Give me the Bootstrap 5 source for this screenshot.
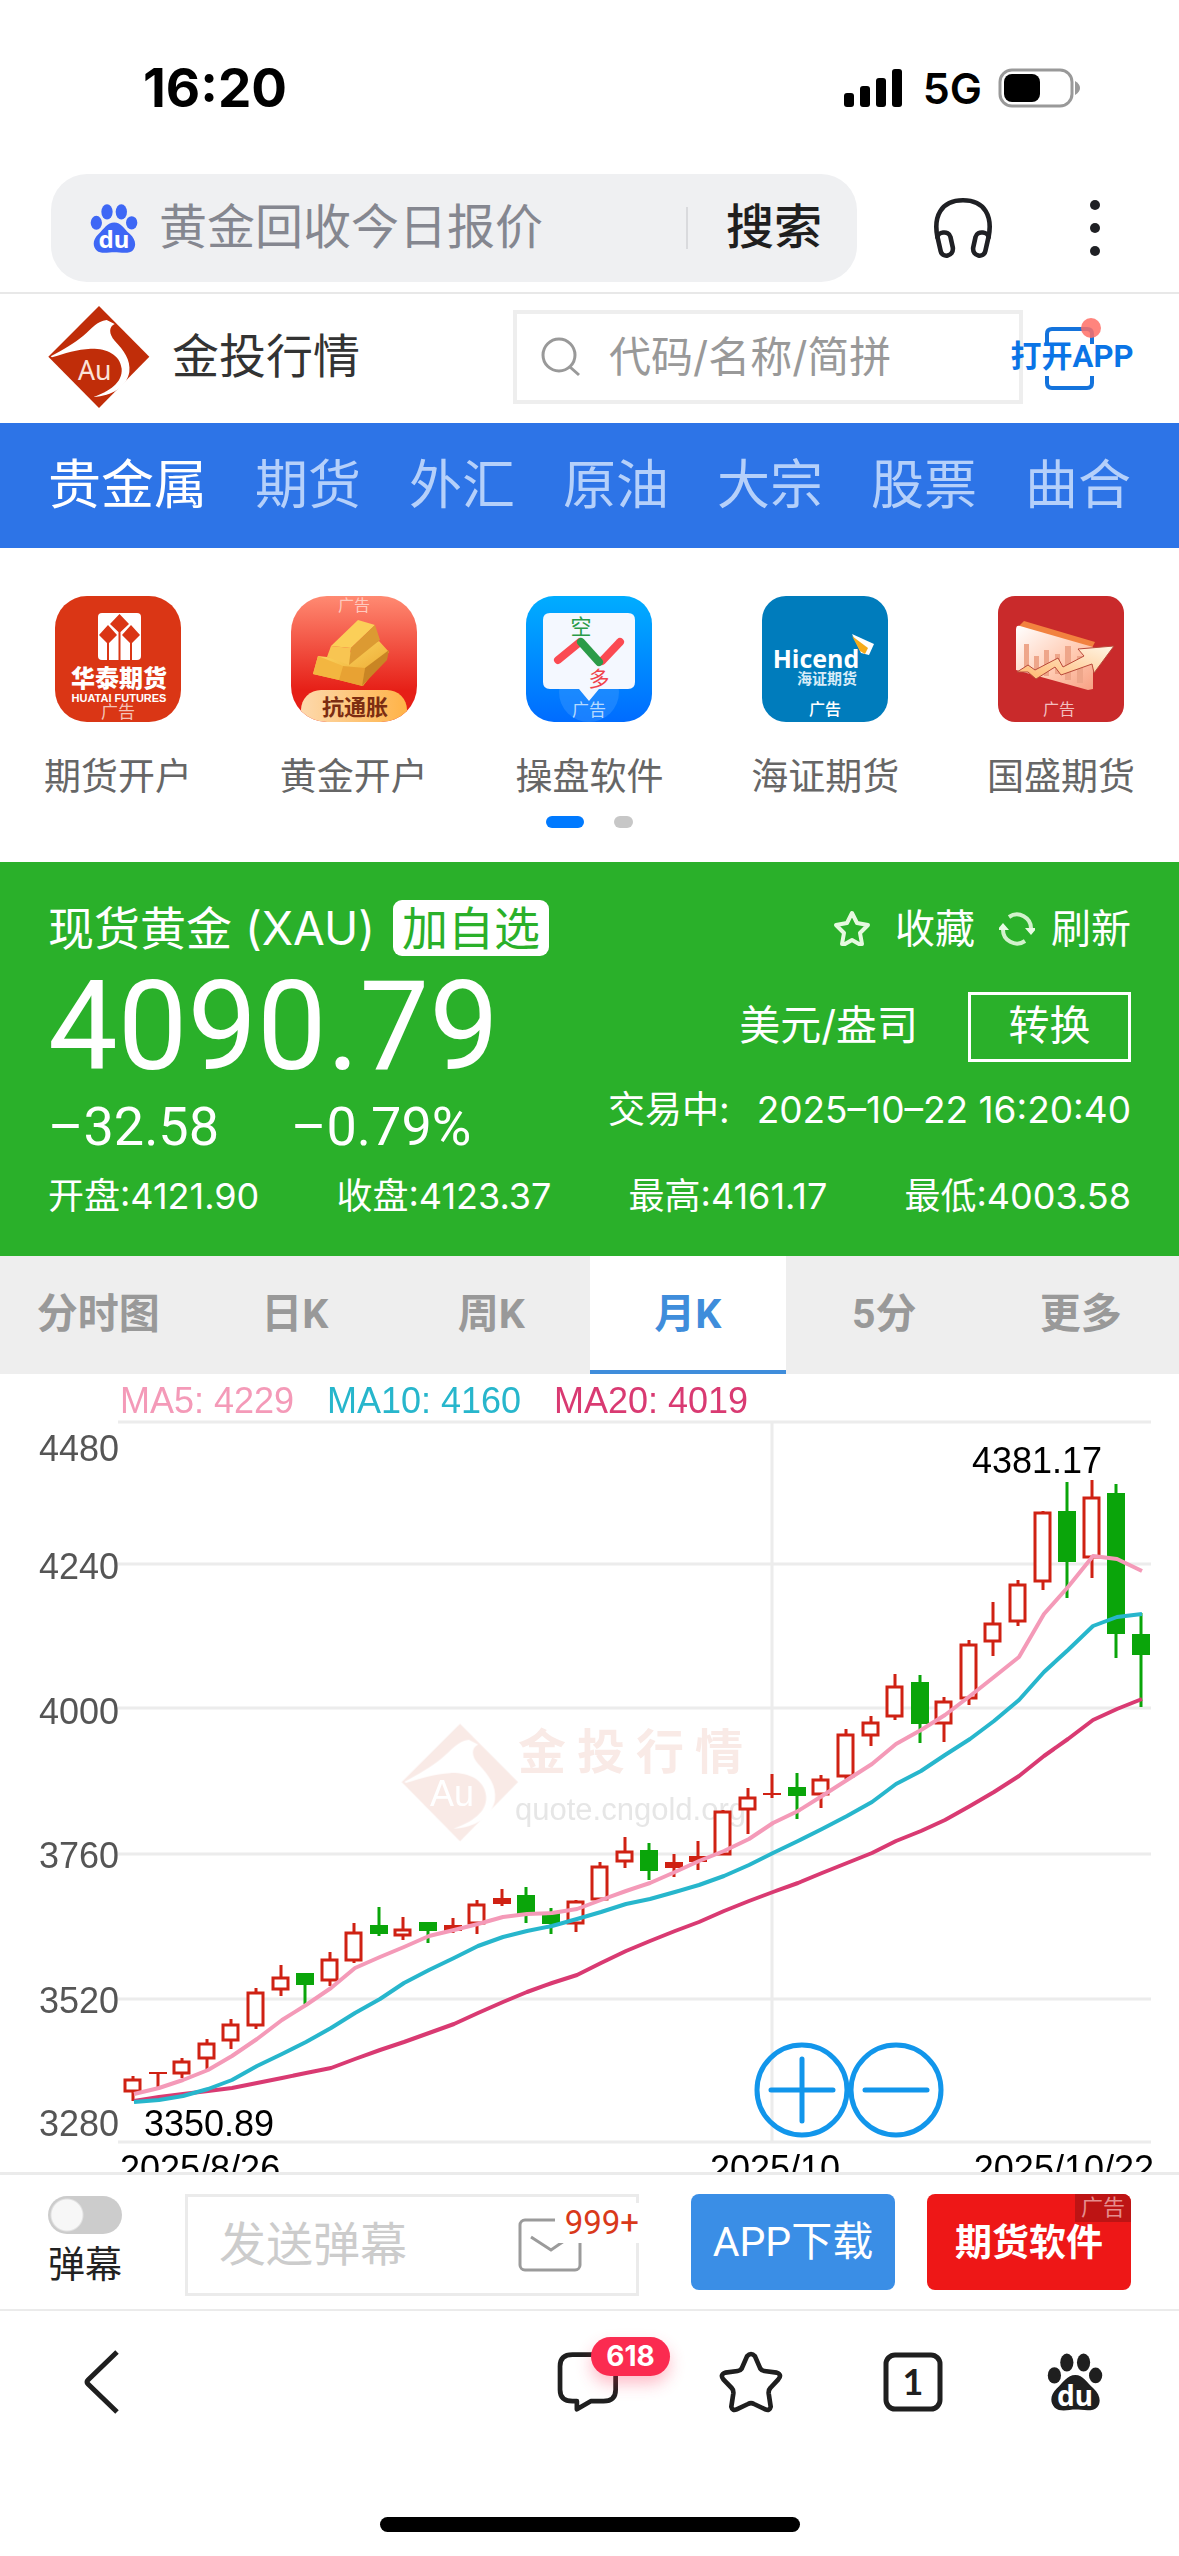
<!DOCTYPE html>
<html lang="zh-CN">
<head>
<meta charset="utf-8">
<meta name="viewport" content="width=device-width, initial-scale=1">
<title>现货黄金 - 金投行情</title>
<link href="https://cdn.jsdelivr.net/npm/bootstrap@5.3.0/dist/css/bootstrap.min.css" rel="stylesheet">
<style>
  body { font-family: Roboto, "Noto Sans CJK SC", sans-serif; color: #333; background: #fff; }
  svg { display: block; flex: none; }
  button { font-family: inherit; }
  a { text-decoration: none; }
  .gutter { padding-left: 48px; padding-right: 48px; }

  .sys-bar { height: 174px; padding: 2px 97px 0 143px; font-family: Inter, sans-serif; color: #000; }
  .sys-time { font-size: 53px; font-weight: 700; line-height: 60px; }
  .sys-net { font-size: 43px; font-weight: 600; line-height: 60px; }

  .url-bar { padding: 0 79px 10px 51px; border-bottom: 2px solid #e8e8e8; }
  .url-pill { height: 108px; width: 806px; background: #eff0f2; border-radius: 36px; padding: 0 35px 0 39px; }
  .url-pill input { flex: 1 1 0; font-size: 48px; line-height: 60px; color: #858790; border: 0; background: none; outline: 0; min-width: 0; padding: 0; margin-left: 21px; }
  .url-pill input::placeholder { color: #858790; opacity: 1; }
  .url-split { width: 2px; height: 42px; background: #d9dadd; }
  .url-pill button { flex: none; white-space: nowrap; font-size: 48px; line-height: 60px; font-weight: 500; color: #1f1f1f; border: 0; background: none; padding: 0; margin-left: 38px; }
  .bare { border: 0; background: none; padding: 0; }
  .more-btn { margin-left: 97px; }

  .site-head { height: 129px; padding-bottom: 4px; }
  .site-name { font-size: 47px; line-height: 60px; color: #333; margin-left: 22px; }
  .code-box { width: 510px; height: 94px; border: 4px solid #eee; margin-left: auto; padding-left: 24px; }
  .code-box input { border: 0; outline: 0; background: none; min-width: 0; font-family: Inter, "Noto Sans CJK SC", sans-serif; font-size: 42px; line-height: 56px; padding: 0; margin-left: 28px; }
  .code-box input::placeholder { color: #999; opacity: 1; }
  .open-app { width: 120px; height: 96px; margin-left: -11px; margin-right: -1px; }
  .open-app span { font-size: 31px; line-height: 40px; font-weight: 700; color: #0a74e6; white-space: nowrap; }

  .cat-nav { background: #2d74e7; height: 125px; }
  .cat-nav a { font-size: 53px; line-height: 72px; color: #b5d0fa; }
  .cat-nav a.active { color: #fff; }

  .apps { padding: 48px 0 34px; }
  .apps a { color: #666; font-size: 37px; line-height: 48px; gap: 32px; }
  .apps svg { width: 126px; height: 126px; }
  .dots { gap: 30px; margin-top: 14px; }
  .dots span { width: 19px; height: 12px; border-radius: 6px; background: #c7c7c7; }
  .dots span.on { width: 38px; background: #007aff; }

  .quote { background: #2ab02a; color: #fff; height: 394px; padding-top: 34px; font-family: Inter, "Noto Sans CJK SC", sans-serif; }
  .q-name { font-size: 46px; line-height: 60px; }
  .q-add { font-size: 46px; line-height: 56px; color: #2ab02a; background: #fff; border: 0; border-radius: 9px; padding: 0 9px; margin-left: 18px; }
  .q-tool { font-size: 40px; line-height: 60px; padding-top: 3px; color: #fff; }
  .q-price { font-family: Roboto, sans-serif; font-size: 124px; line-height: 112px; }
  .q-mid { height: 136px; }
  .q-unit { font-size: 41px; line-height: 60px; padding-bottom: 4px; }
  .q-swap { width: 163px; height: 70px; border: 3px solid #fff; background: none; color: #fff; font-size: 41px; line-height: 56px; padding: 0 0 4px; margin-left: 50px; }
  .q-chg { font-family: Roboto, sans-serif; font-size: 54px; line-height: 64px; gap: 72px; }
  .q-time { font-size: 37px; line-height: 48px; gap: 27px; margin-top: -9px; }
  .q-row { font-size: 36px; line-height: 48px; margin-top: 13px; }

  .k-tabs { background: #eee; height: 118px; }
  .k-tabs a { flex: 1; font-size: 41px; line-height: 56px; font-weight: 700; color: #999; border-bottom: 4px solid transparent; padding-top: 2px; }
  .k-tabs a.active { color: #3f8ddb; background: #fff; border-color: #3f8ddb; }

  .k-chart text { font-family: "Liberation Sans", Arial, sans-serif; font-size: 36px; }
  .k-chart .cjk { font-family: "Noto Sans CJK SC", sans-serif; font-size: 48px; font-weight: 700; }
  .k-chart .soft { font-size: 31px; }

  .say-bar { height: 139px; border-top: 3px solid #ebebeb; border-bottom: 2px solid #ebebeb; padding-top: 19px; }
  .say-toggle { appearance: none; display: block; width: 74px; height: 38px; border-radius: 19px; background: radial-gradient(circle at 19px 19px, #f7f7f7 15px, #ccc 17px); margin: 2px 0 8px; }
  .say-sw { font-size: 37px; line-height: 48px; color: #222; }
  .say-box { width: 454px; height: 102px; border: 3px solid #ebebeb; margin-left: 63px; padding-left: 31px; }
  .say-box input { border: 0; outline: 0; background: none; min-width: 0; width: 290px; font-size: 47px; line-height: 60px; padding: 0; }
  .say-box input::placeholder { color: #ccc; opacity: 1; }
  .say-num { font-size: 33px; line-height: 40px; color: #d9391a; background: #fff; padding: 0 0 0 10px; right: -3px; top: 6px; }
  .say-btn { width: 204px; height: 96px; border: 0; border-radius: 8px; background: #3a8ee6; color: #fff; font-size: 41px; line-height: 56px; padding: 0; }
  .say-btn.hot { background: #ee1717; font-size: 37px; font-weight: 700; margin-left: 32px; padding-top: 4px; }
  .say-ad { font-size: 22px; line-height: 28px; font-weight: 400; background: #bd1414; color: #e58d8d; padding: 0 6px; top: 0; right: 0; border-top-right-radius: 8px; }

  .tool-bar { padding: 39px 76px 0 82px; }
  .tool-bar a + a + a { margin-left: 100px; }
  .msg-num { font-family: Inter, sans-serif; font-size: 28px; line-height: 39px; font-weight: 700; color: #fff; background: #fb2b50; border-radius: 20px; width: 79px; left: 34px; top: -14px; text-align: center; box-shadow: 0 8px 16px rgba(251,43,80,.3); }
  .home-pill { width: 420px; height: 15px; border-radius: 8px; background: #000; margin: 103px auto 24px; }
</style>
<script src="https://cdn.jsdelivr.net/npm/bootstrap@5.3.0/dist/js/bootstrap.bundle.min.js"></script>
</head>
<body>
<svg width="0" height="0" class="position-absolute" aria-hidden="true">
  <symbol id="paw" viewBox="150 36 144 152">
    <g fill="currentColor"><ellipse cx="169" cy="95" rx="17" ry="21"/><ellipse cx="201" cy="62" rx="17" ry="23"/><ellipse cx="244" cy="62" rx="17" ry="23"/><ellipse cx="275" cy="95" rx="17" ry="20"/>
    <path d="M223 94C243 94 252 113 269 128C287 144 290 164 279 177C268 190 240 183 223 183C206 183 183 190 170 178C157 165 158 145 175 129C192 113 202 94 223 94Z"/></g>
  </symbol>
  <symbol id="aulogo" viewBox="22 346 306 310">
    <path fill="currentColor" d="M175 348L326 500L175 654L23 500Z"/>
    <path fill="#fff" d="M30 499C70 477 100 460 128 437C155 415 168 394 198 390L222 402C204 410 204 432 222 452C250 482 270 508 266 546C258 590 215 618 158 621C206 604 246 578 243 536C238 492 196 475 150 476C110 478 72 490 34 502Z"/>
  </symbol>
</svg>

<header class="sys-bar d-flex align-items-center justify-content-between">
  <div class="sys-time">16:20</div>
  <div class="d-flex align-items-center">
    <svg width="60" height="38" viewBox="0 0 60 38" aria-hidden="true"><rect x="1" y="24" width="10" height="14" rx="3"/><rect x="17" y="17" width="10" height="21" rx="3"/><rect x="33" y="9" width="10" height="29" rx="3"/><rect x="49" y="0" width="10" height="38" rx="3"/></svg>
    <div class="sys-net mx-3 ps-1">5G</div>
    <svg width="84" height="40" viewBox="0 0 84 40" aria-hidden="true"><rect x="2" y="2" width="72" height="36" rx="12" fill="none" stroke="#999" stroke-width="3"/><rect x="6" y="6" width="36" height="28" rx="8"/><path d="M77 13Q82 16 82 20Q82 24 77 27Z" fill="#999"/></svg>
  </div>
</header>

<form class="url-bar d-flex align-items-center justify-content-between" onsubmit="return false">
  <div class="url-pill d-flex align-items-center">
    <svg width="48" height="51" viewBox="150 36 144 152" color="#3e67f5" role="img" aria-label="百度"><use href="#paw" x="150" y="36" width="144" height="152"/><text x="222" y="171" text-anchor="middle" font-family="Noto Sans" font-size="72" font-weight="700" fill="#fff">du</text></svg>
    <input type="text" placeholder="黄金回收今日报价" aria-label="搜索内容">
    <span class="url-split"></span>
    <button type="submit">搜索</button>
  </div>
  <button class="bare ms-auto" type="button" aria-label="听">
    <svg width="60" height="62" viewBox="38 34 182 186" fill="none" stroke="#1f2024" stroke-width="14"><path d="M52 158C38 92 62 43 129 43C196 43 220 92 206 158"/><path d="M52 156C50 140 86 132 91 154L98 186C102 214 65 220 61 196ZM206 156C208 140 172 132 167 154L160 186C156 214 193 220 197 196Z"/></svg>
  </button>
  <button class="bare more-btn" type="button" aria-label="更多">
    <svg width="10" height="58" viewBox="0 0 10 58" fill="#1f2024"><circle cx="5" cy="6" r="5"/><circle cx="5" cy="29" r="5"/><circle cx="5" cy="52" r="5"/></svg>
  </button>
</form>

<div class="site-head gutter d-flex align-items-center">
  <svg width="102" height="104" viewBox="22 346 306 310" color="#c02d09" role="img" aria-label="金投网"><use href="#aulogo" x="22" y="346" width="306" height="310"/><text x="162" y="570" text-anchor="middle" font-family="Noto Sans" font-size="80" fill="#fbe3d9">Au</text></svg>
  <div class="site-name">金投行情</div>
  <label class="code-box d-flex align-items-center">
    <svg width="40" height="40" viewBox="0 0 40 40" fill="none" stroke="#999" stroke-width="3"><circle cx="18" cy="18" r="16"/><path d="M29 30L38 38"/></svg>
    <input class="flex-grow-1" type="text" placeholder="代码/名称/简拼" aria-label="代码名称简拼">
  </label>
  <a class="open-app position-relative d-flex align-items-center justify-content-center" href="#">
    <svg class="position-absolute top-0 start-0" width="120" height="96" viewBox="0 0 120 96" fill="none" stroke="#1473dc" stroke-width="4"><path d="M35 35V25Q35 20 40 20H75Q80 20 80 25V35M35 67V74Q35 79 40 79H75Q80 79 80 74V67"/><circle cx="79" cy="19" r="10" fill="#ff6f66" opacity=".85" stroke="none"/></svg>
    <span class="position-relative">打开APP</span>
  </a>
</div>

<nav class="cat-nav gutter d-flex align-items-center justify-content-between">
  <a class="active" href="#">贵金属</a><a href="#">期货</a><a href="#">外汇</a><a href="#">原油</a><a href="#">大宗</a><a href="#">股票</a><a href="#">曲合</a>
</nav>

<section class="apps">
  <div class="row row-cols-5 g-0">
    <a class="col d-flex flex-column align-items-center" href="#">
      <svg viewBox="0 0 126 126" font-family="Noto Sans CJK SC" text-anchor="middle"><rect width="126" height="126" rx="32" fill="#da3615"/><rect x="43" y="17" width="43" height="47" rx="4" fill="#fff"/><path fill="#da3615" d="M64.500 18L74 28L64.500 37L55 28ZM53 29L62 39L53 48L44 39ZM76 29L85 39L76 48L67 39ZM52 46h2v18h-2zM63.500 36h2v28h-2zM75 46h2v18h-2z"/><text x="64" y="91" font-size="24" font-weight="900" fill="#fff">华泰期货</text><text x="64" y="106" font-size="11" font-weight="700" font-family="Liberation Sans" fill="#fff">HUATAI FUTURES</text><text x="63" y="122" font-size="17" fill="#f3c3b7">广告</text></svg>
      <span>期货开户</span>
    </a>
    <a class="col d-flex flex-column align-items-center" href="#">
      <svg viewBox="0 0 126 126" font-family="Noto Sans CJK SC" text-anchor="middle">
        <defs><linearGradient id="gr" x2="0" y2="1"><stop stop-color="#ff8a72"/><stop offset=".75" stop-color="#e61f17"/></linearGradient><linearGradient id="gg" x2="1" y2="1"><stop stop-color="#ffdf6a"/><stop offset="1" stop-color="#e9a02a"/></linearGradient><linearGradient id="gp" x2="1"><stop stop-color="#fdd9ad"/><stop offset="1" stop-color="#ffb347"/></linearGradient><clipPath id="gc"><rect width="126" height="126" rx="36"/></clipPath></defs>
        <g clip-path="url(#gc)"><rect width="126" height="126" fill="url(#gr)"/>
        <path d="M88 45L98 56L72 90L48 84L22 78L27 60L45 62Z" fill="url(#gg)"/>
        <path d="M27 60L52 70L48 84L22 78Z" fill="#f3b640"/><path d="M52 70L74 72L71 90L48 84Z" fill="#e8a233"/><path d="M74 72L98 54L96 64L71 90Z" fill="#c98524"/>
        <path d="M67 24L84 29L60 52L40 50Z" fill="#fbcf58"/><path d="M40 50L60 52L58 69L36 61Z" fill="#f8c552"/><path d="M84 29L89 44L58 69L60 52Z" fill="#dc9a32"/>
        <rect x="10" y="94" width="106" height="40" rx="20" fill="url(#gp)"/></g>
        <text x="64" y="119" font-size="22" font-weight="700" fill="#7c2d12">抗通胀</text><text x="63" y="15" font-size="16" fill="#ffc9bd">广告</text></svg>
      <span>黄金开户</span>
    </a>
    <a class="col d-flex flex-column align-items-center" href="#">
      <svg viewBox="0 0 126 126" font-family="Noto Sans CJK SC" text-anchor="middle">
        <defs><linearGradient id="bl" x2="0" y2="1"><stop stop-color="#00adff"/><stop offset="1" stop-color="#006cff"/></linearGradient></defs>
        <rect width="126" height="126" rx="28" fill="url(#bl)"/><circle cx="63" cy="96" r="30" fill="#4ba3ff" opacity=".35"/><path d="M24 17H102Q109 17 109 24V86Q109 93 102 93H73L63 105L53 93H24Q17 93 17 86V24Q17 17 24 17Z" fill="#f4f8ff"/><g fill="none" stroke-width="8" stroke-linecap="round"><path d="M32 64L54 46" stroke="#fb4a52"/><path d="M76 65L94 46" stroke="#fb4a52"/><path d="M55 46L73 66" stroke="#2b9b48"/></g><text x="55" y="38" font-size="21" fill="#2b9b48">空</text><text x="73" y="90" font-size="21" fill="#f0434c">多</text><text x="63" y="120" font-size="17" fill="#b5daff">广告</text></svg>
      <span>操盘软件</span>
    </a>
    <a class="col d-flex flex-column align-items-center" href="#">
      <svg viewBox="0 0 126 126" font-family="Noto Sans CJK SC" text-anchor="middle"><rect width="126" height="126" rx="24" fill="#007cbc"/><text x="54" y="72" font-size="25" font-weight="700" font-family="Open Sans" fill="#fff">Hicend</text><path d="M90 38L112 48L107 59L99 57Z" fill="#fff"/><path d="M90 40L106 52L103 58L98 55Z" fill="#f6ab1b"/><text x="65" y="88" font-size="15" font-weight="700" fill="#d8ecf8">海证期货</text><text x="63" y="119" font-size="16" font-weight="500" fill="#fff">广告</text></svg>
      <span>海证期货</span>
    </a>
    <a class="col d-flex flex-column align-items-center" href="#">
      <svg viewBox="0 0 126 126" font-family="Noto Sans CJK SC" text-anchor="middle">
        <defs><linearGradient id="pl" x2="1" y2="1"><stop stop-color="#fff"/><stop offset=".6" stop-color="#ffc9b0"/><stop offset="1" stop-color="#f7a184"/></linearGradient><linearGradient id="ar" x1="0" y1="1" x2="1" y2="0"><stop stop-color="#ffb56b"/><stop offset="1" stop-color="#fff6e6"/></linearGradient></defs>
        <rect width="126" height="126" rx="17" fill="#c92a2b"/><path d="M20 31L26 25L97 46L94 52Z" fill="#f2823f"/><path d="M18 33Q18 29 22 30L95 51V93L90 94L18 74Z" fill="url(#pl)"/><path d="M26 48h5v24h-5zM36 60h5v14h-5zM46 54h5v26h-5zM57 58h5v20h-5zM67 50h6v34h-6zM79 60h6v27h-6z" fill="#eea68a"/><path d="M19 76L30 69L37 74L60 62L65 71L86 60L80 53L116 50L96 77L94 68L63 79L57 71L38 83L30 76Z" fill="url(#ar)" stroke="#b9493a" stroke-width="1"/><text x="61" y="119" font-size="16" fill="#f2bfc0">广告</text></svg>
      <span>国盛期货</span>
    </a>
  </div>
  <div class="dots d-flex justify-content-center"><span class="on"></span><span></span></div>
</section>

<section class="quote gutter">
  <div class="d-flex align-items-center">
    <span class="q-name">现货黄金 (XAU)</span>
    <button class="q-add" type="button">加自选</button>
    <a class="q-tool d-flex align-items-center ms-auto" href="#"><svg class="me-4" width="38" height="38" viewBox="0 0 38 38" fill="none" stroke="#e6f9e0" stroke-width="4" stroke-linejoin="round"><path d="M19 3L24 13L35 15L27 23L29 34H26L19 30L12 34H9L11 23L3 15L14 13Z"/></svg>收藏</a>
    <a class="q-tool d-flex align-items-center ms-4" href="#"><svg class="me-3" width="36" height="36" viewBox="0 0 36 36" fill="none" stroke="#d2f2cc" stroke-width="4"><path d="M10 6A14 14 0 0 1 32 18M26 30A14 14 0 0 1 4 18"/><path d="M26 17H38L32 24ZM-2 19H10L4 12Z" fill="#e9fbe5" stroke="none"/></svg>刷新</a>
  </div>
  <div class="q-mid d-flex align-items-center">
    <div class="q-price">4090.79</div>
    <div class="q-unit ms-auto">美元/盎司</div>
    <button class="q-swap" type="button">转换</button>
  </div>
  <div class="d-flex align-items-start justify-content-between">
    <div class="q-chg d-flex"><span>–32.58</span><span>–0.79%</span></div>
    <div class="q-time d-flex"><span>交易中:</span><span>2025–10–22 16:20:40</span></div>
  </div>
  <div class="q-row d-flex justify-content-between"><span>开盘:4121.90</span><span>收盘:4123.37</span><span>最高:4161.17</span><span>最低:4003.58</span></div>
</section>

<nav class="k-tabs d-flex text-center">
  <a class="d-flex align-items-center justify-content-center" href="#">分时图</a>
  <a class="d-flex align-items-center justify-content-center" href="#">日K</a>
  <a class="d-flex align-items-center justify-content-center" href="#">周K</a>
  <a class="d-flex align-items-center justify-content-center active" href="#">月K</a>
  <a class="d-flex align-items-center justify-content-center" href="#">5分</a>
  <a class="d-flex align-items-center justify-content-center" href="#">更多</a>
</nav>

<svg class="k-chart w-100 h-auto" viewBox="0 0 1179 798" role="img" aria-label="K线图">
  <path fill="none" stroke="#ececec" stroke-width="3" d="M118 48H1151M118 190H1151M118 334H1151M118 480H1151M118 625H1151M118 768H1151M772 48V768"/>
  <g opacity=".1"><svg x="401" y="349" width="118" height="119" viewBox="22 346 306 310" color="#c02d09"><use href="#aulogo" x="22" y="346" width="306" height="310"/></svg><text class="cjk" fill="#c02d09" x="518 577 636 695" y="395">金投行情</text></g>
  <text x="452" y="432" text-anchor="middle" fill="#fff">Au</text>
  <text class="soft" x="515" y="446" fill="#e6e6e6">quote.cngold.org</text>
  <text x="120" y="39" fill="#f49ab8">MA5: 4229</text><text x="327" y="39" fill="#27b6cc">MA10: 4160</text><text x="554" y="39" fill="#d93a72">MA20: 4019</text>
  <g fill="#555" text-anchor="end"><text x="119" y="87">4480</text><text x="119" y="205">4240</text><text x="119" y="350">4000</text><text x="119" y="494">3760</text><text x="119" y="639">3520</text><text x="119" y="762">3280</text></g>
  <g id="plot"></g>
  <text x="144" y="762" fill="#000">3350.89</text><text x="972" y="99" fill="#000">4381.17</text>
  <text x="120" y="807" fill="#000">2025/8/26</text><text x="775" y="807" text-anchor="middle" fill="#000">2025/10</text><text x="1154" y="807" text-anchor="end" fill="#000">2025/10/22</text>
  <g fill="none" stroke="#1296eb" stroke-width="5" stroke-linecap="round"><circle cx="802" cy="716" r="45"/><path d="M771 716H833M802 685V747"/><circle cx="896" cy="716" r="45"/><path d="M865 716H927"/></g>
</svg>

<form class="say-bar gutter d-flex align-items-start" onsubmit="return false">
  <label class="say-sw"><input class="say-toggle" type="checkbox" role="switch">弹幕</label>
  <div class="say-box position-relative d-flex align-items-center">
    <input type="text" placeholder="发送弹幕" aria-label="发送弹幕">
    <svg class="ms-2" width="66" height="56" viewBox="0 0 66 56" fill="none" stroke="#9b9b9b" stroke-width="3"><rect x="3" y="3" width="60" height="50" rx="5"/><path d="M14 20L34 33L50 22"/></svg>
    <span class="say-num position-absolute">999+</span>
  </div>
  <button class="say-btn ms-auto" type="button">APP下载</button>
  <button class="say-btn hot position-relative" type="button">期货软件<span class="say-ad position-absolute">广告</span></button>
</form>

<nav class="tool-bar d-flex align-items-center">
  <a href="#" aria-label="返回"><svg width="38" height="64" viewBox="0 0 38 64" fill="none" stroke="#1f1f1f" stroke-width="5"><path d="M35 2L6 30Q4 32 6 34L35 62"/></svg></a>
  <a class="position-relative ms-auto" href="#" aria-label="评论"><svg width="62" height="62" viewBox="22 64 184 182" fill="none" stroke="#1f1f1f" stroke-width="14" stroke-linejoin="round"><path d="M68 74H158Q196 74 196 108V178Q196 212 160 212H122L81 236V212H68Q31 212 31 178V108Q31 74 68 74Z"/></svg><span class="msg-num position-absolute">618</span></a>
  <a href="#" aria-label="收藏"><svg width="64" height="62" viewBox="504 62 192 184" fill="none" stroke="#1f1f1f" stroke-width="14" stroke-linejoin="round"><path d="M588 77Q600 63 612 77L628 114Q632 120 640 121L677 126Q694 132 682 146L658 172Q652 178 653 188L659 228Q656 242 643 236L609 220Q600 215 591 220L557 236Q544 242 541 228L547 188Q548 178 542 172L517 146Q506 132 523 126L560 121Q568 120 572 114Z"/></svg></a>
  <a href="#" aria-label="窗口"><svg width="60" height="60" viewBox="0 0 60 60" fill="none" stroke="#1f1f1f" stroke-width="5"><rect x="3" y="3" width="54" height="54" rx="9"/><text x="30" y="43" text-anchor="middle" font-family="Lato" font-size="36" font-weight="700" fill="#1f1f1f" stroke="none">1</text></svg></a>
  <a class="ps-1" href="#" aria-label="首页"><svg width="56" height="60" viewBox="150 36 144 152" color="#1f1f1f"><use href="#paw" x="150" y="36" width="144" height="152"/><text x="222" y="174" text-anchor="middle" font-family="Noto Sans" font-size="72" font-weight="700" fill="#fff">du</text></svg></a>
</nav>
<div class="home-pill"></div>

<script>
  // Candles: [rising, high, body top, body bottom, low] in plot units
  const candles = [
    [1,1349,1356,1381,1397],[1,1343,1345,1345,1372],[1,1316,1321,1346,1354],[1,1280,1287,1317,1336],[1,1240,1251,1283,1299],[1,1181,1189,1255,1260],
    [1,1137,1161,1186,1197],[0,1153,1153,1175,1213],[1,1112,1126,1168,1178],[1,1058,1074,1130,1134],[0,1027,1061,1078,1082],[1,1046,1069,1083,1089],
    [0,1055,1055,1073,1095],[1,1047,1063,1071,1076],[1,1013,1021,1059,1079],[1,992,1012,1019,1025],[0,988,1004,1040,1057],[0,1028,1038,1060,1078],
    [1,1013,1016,1059,1074],[1,941,949,1014,1014],[1,892,920,940,953],[0,905,918,958,975],[1,926,943,950,970],[1,901,932,939,956],
    [1,841,844,927,927],[1,799,816,842,888],[1,772,811,811,819],[0,770,797,815,858],[1,775,782,813,837],[1,686,696,778,782],
    [1,661,673,699,718],[1,582,604,664,670],[0,584,597,677,713],[1,625,633,676,711],[1,517,523,630,641],[1,444,484,521,546],
    [1,401,409,481,489],[1,270,271,406,420],[0,214,270,367,435],[1,210,243,360,398],[0,218,235,504,551],[0,465,505,545,645]];
  const averages = {
    '#d93a72': [1397,1390,1385,1379,1373,1363,1353,1344,1334,1317,1301,1285,1268,1250,1229,1208,1190,1173,1156,1133,1111,1092,1073,1055,1034,1015,998,980,962,943,923,901,881,860,834,807,776,738,705,669,648,629],
    '#27b6cc': [1400,1396,1388,1374,1357,1331,1307,1284,1259,1229,1202,1173,1148,1125,1102,1084,1073,1063,1050,1037,1021,1011,999,985,967,946,924,901,877,853,826,791,766,737,705,671,631,577,535,489,472,466],
    '#f49ab8': [1384,1373,1357,1338,1312,1279,1243,1214,1181,1144,1122,1103,1083,1071,1060,1046,1041,1038,1030,1013,997,981,959,939,920,897,867,843,815,784,754,715,688,660,624,587,548,467,415,355,361,385] };
  const X = i => Math.round(133 + i * 24.585);
  const Y = u => Math.round(u * 0.523 - 4);
  let out = '';
  candles.forEach(([up, hi, top, bot, lo], i) => {
    const x = X(i), c = up ? '#cf2113' : '#0aa50a';
    out += `<path stroke="${c}" stroke-width="3" d="M${x} ${Y(hi)}V${Y(top)}M${x} ${Y(bot)}V${Y(lo)}"/>`;
    const h = Y(bot) - Y(top);
    if (!up) out += `<rect x="${x - 9}" y="${Y(top)}" width="18" height="${h}" fill="${c}"/>`;
    else if (h < 5) out += `<rect x="${x - 9}" y="${Y(top) - 1}" width="18" height="${h + 2}" fill="${c}"/>`;
    else out += `<rect x="${x - 8}" y="${Y(top) + 1}" width="15" height="${h - 2}" fill="#fff" stroke="${c}" stroke-width="3"/>`;
  });
  for (const c in averages)
    out += `<polyline fill="none" stroke="${c}" stroke-width="4" stroke-linejoin="round" points="${averages[c].map((u, i) => (X(i) + 1) + ',' + Y(u)).join(' ')}"/>`;
  document.getElementById('plot').innerHTML = out;
</script>
</body>
</html>
